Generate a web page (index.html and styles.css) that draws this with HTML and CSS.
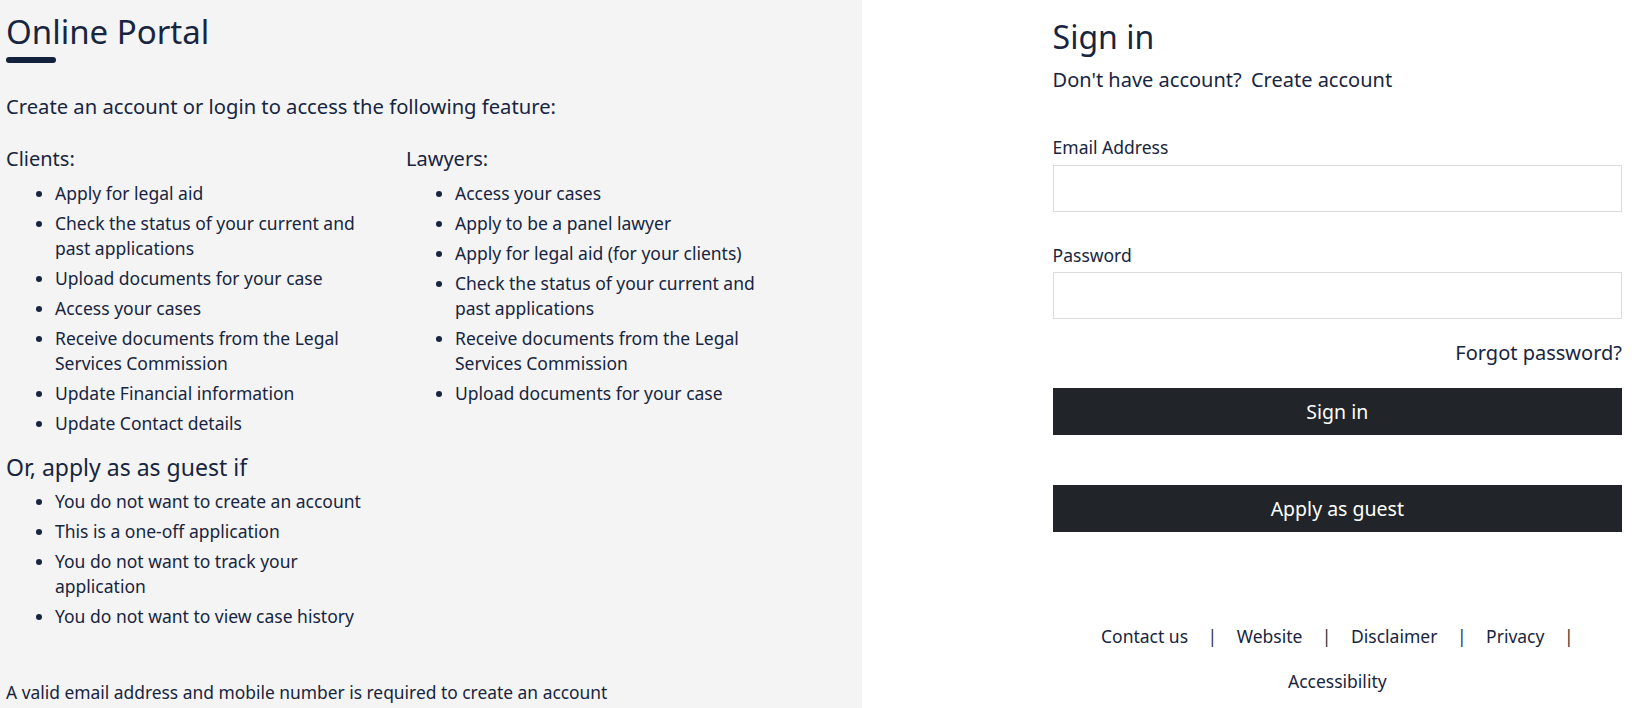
FILE: index.html
```html
<!DOCTYPE html>
<html lang="en">
<head>
<meta charset="utf-8">
<title>Online Portal - Sign in</title>
<link rel="stylesheet" href="styles.css">
</head>
<body>
<div class="page">
  <section class="info">
    <h1 class="info-title">Online Portal</h1>
    <div class="title-bar"></div>
    <p class="intro">Create an account or login to access the following feature:</p>
    <div class="columns">
      <div class="col">
        <h2 class="group-title">Clients:</h2>
        <ul class="list">
          <li>Apply for legal aid</li>
          <li>Check the status of your current and past applications</li>
          <li>Upload documents for your case</li>
          <li>Access your cases</li>
          <li>Receive documents from the Legal Services Commission</li>
          <li>Update Financial information</li>
          <li>Update Contact details</li>
        </ul>
      </div>
      <div class="col">
        <h2 class="group-title">Lawyers:</h2>
        <ul class="list">
          <li>Access your cases</li>
          <li>Apply to be a panel lawyer</li>
          <li>Apply for legal aid (for your clients)</li>
          <li>Check the status of your current and past applications</li>
          <li>Receive documents from the Legal Services Commission</li>
          <li>Upload documents for your case</li>
        </ul>
      </div>
    </div>
    <div class="guest">
      <h2 class="guest-title">Or, apply as as guest if</h2>
      <ul class="list">
        <li>You do not want to create an account</li>
        <li>This is a one-off application</li>
        <li>You do not want to track your application</li>
        <li>You do not want to view case history</li>
      </ul>
    </div>
    <p class="note">A valid email address and mobile number is required to create an account</p>
  </section>
  <section class="signin">
    <h1 class="signin-title">Sign in</h1>
    <p class="signup-line">Don't have account? <a class="link" href="#">Create account</a></p>
    <form class="form">
      <label class="label" for="email">Email Address</label>
      <input class="input" id="email" type="email">
      <label class="label label-pw" for="password">Password</label>
      <input class="input" id="password" type="password">
      <div class="forgot-row"><a class="link forgot" href="#">Forgot password?</a></div>
      <button class="btn btn-signin" type="button">Sign in</button>
      <button class="btn btn-guest" type="button">Apply as guest</button>
    </form>
    <nav class="footer-links">
      <a class="flink" href="#">Contact us</a><span class="sep">|</span>
      <a class="flink" href="#">Website</a><span class="sep">|</span>
      <a class="flink" href="#">Disclaimer</a><span class="sep">|</span>
      <a class="flink" href="#">Privacy</a><span class="sep sep-last">|</span>
      <a class="flink" href="#">Accessibility</a>
    </nav>
  </section>
</div>
</body>
</html>
```
FILE: styles.css
```css
* { box-sizing: border-box; }
html, body {
  margin: 0;
  padding: 0;
  height: 100%;
}
body {
  font-family: "Noto Sans", "Open Sans", sans-serif;
  color: #172541;
  background: #ffffff;
  overflow: hidden;
}
.page {
  display: flex;
  min-height: 708px;
}
.info {
  width: 862px;
  flex: none;
  background: #f4f4f4;
  padding: 13px 0 0 6px;
}
.info-title {
  margin: 0;
  font-size: 33px;
  line-height: 38px;
  font-weight: 400;
}
.title-bar {
  width: 50px;
  height: 6px;
  border-radius: 3px;
  background: #13213d;
  margin-top: 6px;
}
.intro {
  margin: 30px 0 0;
  font-size: 20.2px;
  line-height: 26px;
}
.columns {
  display: grid;
  grid-template-columns: 364px 364px;
  column-gap: 36px;
  margin-top: 27px;
}
.group-title {
  margin: 0;
  font-size: 20px;
  line-height: 26px;
  font-weight: 400;
}
.guest-title {
  margin: 0;
  font-size: 23px;
  line-height: 26px;
  font-weight: 400;
}
.list {
  margin: 9px 0 0;
  padding-left: 49px;
}
.list li {
  font-size: 17.5px;
  line-height: 25px;
  margin-bottom: 5px;
}
.list li:last-child { margin-bottom: 0; }
.guest {
  width: 364px;
  margin-top: 18px;
}
.note {
  margin: 51px 0 0;
  font-size: 17.4px;
  line-height: 25px;
}
.signin {
  flex: 1;
  padding: 18px 17px 0 190.6px;
}
.signin-title {
  margin: 0;
  font-size: 32px;
  line-height: 38px;
  font-weight: 400;
}
.signup-line {
  margin: 11px 0 0;
  font-size: 20px;
  line-height: 26px;
}
.link {
  color: #172541;
  text-decoration: none;
  margin-left: 4px;
}
.form {
  display: flex;
  flex-direction: column;
  margin-top: 42px;
}
.label {
  font-size: 17.5px;
  line-height: 24px;
  margin-bottom: 5.6px;
}
.label-pw { margin-top: 31px; }
.input {
  height: 47px;
  border: 1px solid #dcdcdc;
  background: #fff;
  font: inherit;
  padding: 0 12px;
}
.forgot-row {
  text-align: right;
  margin-top: 21px;
  font-size: 20px;
  line-height: 26px;
}
.forgot { margin-left: 0; }
.btn {
  border: 0;
  background: #212529;
  color: #ffffff;
  font-family: "Noto Sans", "Open Sans", sans-serif;
  font-size: 19.5px;
  line-height: 26px;
  padding: 0;
  cursor: pointer;
}
.btn-signin {
  height: 47px;
  margin-top: 22px;
}
.btn-guest {
  height: 47px;
  margin-top: 50px;
}
.footer-links {
  display: flex;
  flex-wrap: wrap;
  justify-content: center;
  margin-top: 82px;
  font-size: 17.5px;
  line-height: 45px;
}
.flink {
  color: #172541;
  text-decoration: none;
}
.sep {
  color: #333333;
  margin: 0 19.5px;
}
.sep-last { margin-right: 0; }
```
